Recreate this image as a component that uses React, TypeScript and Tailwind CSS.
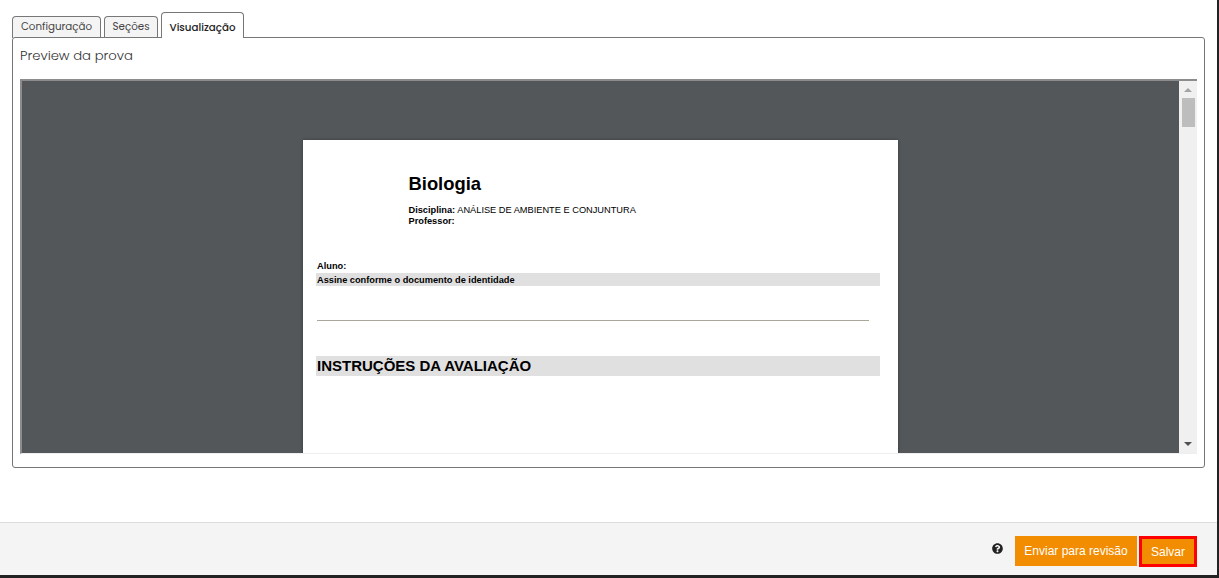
import { FaQuestionCircle } from "react-icons/fa";

const tabBase =
  "h-[22px] rounded-t-[4px] border border-b-0 border-[#777] bg-[#f4f4f4] pb-[2px] text-[10.3px] text-[#444] flex items-center justify-center";

function Tabs() {
  return (
    <div className="flex items-end gap-[3px] pl-[12px] pt-[12px] h-[38px]">
      <div className={`${tabBase} w-[89px]`}>Configuração</div>
      <div className={`${tabBase} w-[54px]`}>Seções</div>
      <div className="relative z-10 flex h-[26px] w-[83px] items-center justify-center rounded-t-[4px] border border-b-0 border-[#777] bg-white pt-[4px] text-[10.3px] font-medium text-[#222]">
        Visualização
      </div>
    </div>
  );
}

function PdfPage() {
  return (
    <div className="mx-auto mt-[59px] flex h-[400px] w-[595px] shrink-0 flex-col bg-white pl-[13px] pr-[18px] font-['Liberation_Sans',sans-serif] text-black shadow-[0_0_3px_rgba(0,0,0,0.35)]">
      <div className="pl-[92.5px] pt-[33px]">
        <h1 className="text-[18.4px] font-bold leading-[22px]">Biologia</h1>
        <p className="mt-[10px] text-[9.24px] leading-[11px]">
          <b>Disciplina:</b> ANÁLISE DE AMBIENTE E CONJUNTURA
        </p>
        <p className="text-[9.24px] font-bold leading-[11px]">Professor:</p>
      </div>
      <p className="mt-[34px] pl-[1px] text-[9.24px] font-bold leading-[11px]">Aluno:</p>
      <div className="mt-[1px] h-[13px] bg-[#e0e0e0] pl-[1px] text-[9.24px] font-bold leading-[14px]">
        Assine conforme o documento de identidade
      </div>
      <div className="ml-[1px] mr-[11px] mt-[34px] h-px bg-[#aaa69a]" />
      <div className="mt-[35px] h-[20px] bg-[#e0e0e0] pl-[1px] text-[15px] font-bold leading-[20px]">
        INSTRUÇÕES DA AVALIAÇÃO
      </div>
    </div>
  );
}

function Scrollbar() {
  return (
    <div className="flex w-[18px] shrink-0 flex-col items-center bg-[#f0f0f0] pt-[7px]">
      <div className="h-0 w-0 border-x-[4px] border-b-[4px] border-x-transparent border-b-[#a3a3a3]" />
      <div className="mt-[6px] h-[29px] w-[13px] bg-[#bdbdbd]" />
      <div className="mt-auto mb-[7px] h-0 w-0 border-x-[4px] border-t-[4px] border-x-transparent border-t-[#505050]" />
    </div>
  );
}

export default function App() {
  return (
    <div className="h-[578px] w-[1219px] overflow-hidden bg-[#222] pb-[3px] pr-[2px] font-['Poppins','Lato',sans-serif]">
      <div className="flex h-full flex-col bg-white">
        <Tabs />
        <section className="relative mx-[12px] -mt-px h-[431px] rounded-[3px] border border-[#777] px-[7px]">
          <h2 className="h-[41px] pt-[9px] text-[13.2px] font-light leading-[18px] text-[#333]">Preview da prova</h2>
          <div className="flex h-[375px] border-b border-l-2 border-t-2 border-b-[#eee] border-l-[#8c8c8c] border-t-[#8c8c8c] bg-[#53575a]">
            <div className="flex min-w-0 flex-1 overflow-hidden">
              <PdfPage />
            </div>
            <Scrollbar />
          </div>
        </section>
        <footer className="mt-auto flex h-[53px] items-start justify-end border-t border-[#ddd] bg-[#f4f4f4] pr-[20px] pt-[13px] font-['Liberation_Sans',sans-serif]">
          <FaQuestionCircle className="mr-[12px] mt-[7px] h-[11px] w-[11px] text-[#222]" />
          <button className="h-[30px] w-[122px] bg-[#f28c00] text-[12px] text-white">Enviar para revisão</button>
          <button className="ml-[2px] h-[31px] w-[58px] border-[3px] border-[#f00] bg-[#f28c00] text-[12px] text-white">
            Salvar
          </button>
        </footer>
      </div>
    </div>
  );
}
